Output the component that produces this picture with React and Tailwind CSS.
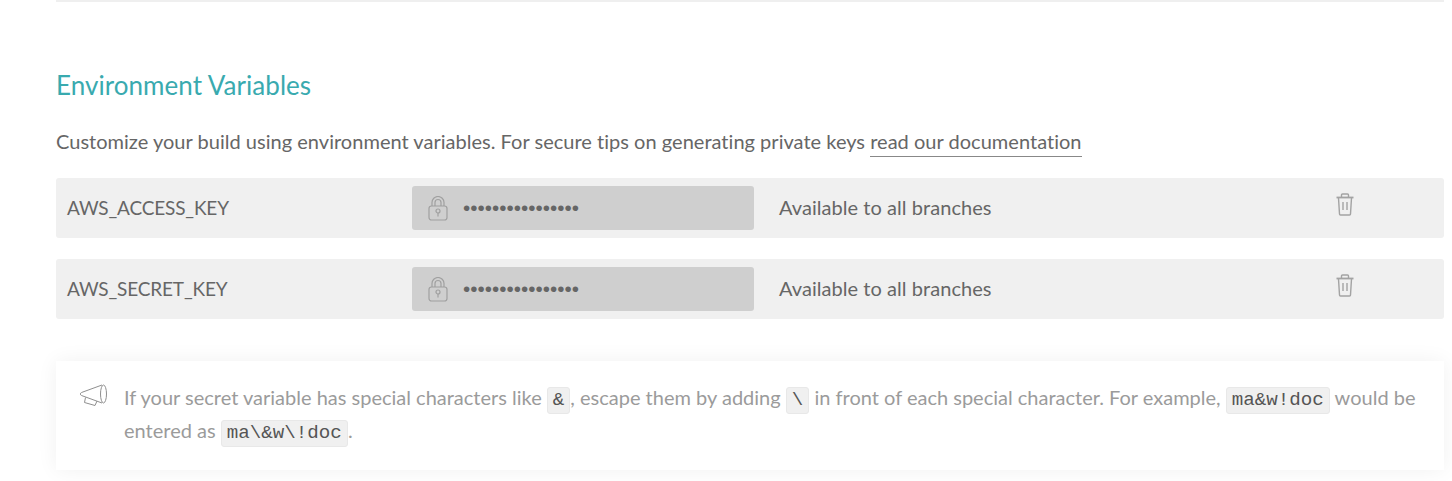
const Lock = () => (
  <svg width="20" height="25" viewBox="0 0 20 25" fill="none" stroke="#a0a0a0" strokeWidth="1.2" className="shrink-0">
    <rect x="1" y="10" width="18" height="14" rx="2.500" />
    <path d="M4 10V6.500a6 6 0 0 1 12 0V10" />
    <path d="M7 10V6.500a3 3 0 0 1 6 0V10" />
    <circle cx="10" cy="15" r="2" />
    <path d="M10 17v3.500" />
  </svg>
)

const Trash = () => (
  <svg width="18" height="23" viewBox="0 0 18 23" fill="none" stroke="#a3a3a3" strokeWidth="1.4">
    <path d="M0.500 4.500h17" strokeWidth="1.800" />
    <path d="M5.500 4V2a1 1 0 0 1 1-1h5a1 1 0 0 1 1 1v2" />
    <path d="M2.500 5l1 16a1 1 0 0 0 1 1h9a1 1 0 0 0 1-1l1-16" />
    <path d="M7 9v8M11 9v8" />
  </svg>
)

const Megaphone = () => (
  <svg width="29" height="23" viewBox="0 0 29 23" fill="none" stroke="#8f8f8f" strokeWidth="1" className="shrink-0 mt-[2px]">
    <path d="M23 2 2.500 9.500c-1.500.6-1.500 2.400 0 3L23 20" />
    <ellipse cx="24.500" cy="11" rx="3" ry="9" />
    <path d="M6.500 14.500 5.500 19.500 16 22.500 18 18" />
  </svg>
)

const EnvRow = ({ name }) => (
  <div className="flex items-start h-[60px] bg-[#f0f0f0] rounded-[3px]">
    <div className="w-[356px] pl-[11px] h-full flex items-center text-[19px] tracking-[-0.15px] text-[#666]">{name}</div>
    <div className="w-[342px] h-[44px] mt-2 bg-[#cfcfcf] rounded-[3px] flex items-center pl-[16px]">
      <Lock />
      <span className="ml-[15px] text-[20.700px] text-[#666] font-['Liberation_Sans',sans-serif] leading-none">••••••••••••••••</span>
    </div>
    <div className="ml-[25px] h-full pb-[2px] flex items-center text-[20px] tracking-[0.05px] text-[#666]">Available to all branches</div>
    <div className="ml-auto mr-[90px] mt-[15px]"><Trash /></div>
  </div>
)

const Code = ({ children }) => (
  <code className="inline-block leading-[25px] bg-[#f0f0f0] border border-[#e8e8e8] rounded-[3px] px-[5px] text-[19.200px] text-[#555] font-['Liberation_Mono',monospace]">{children}</code>
)

export default function App() {
  return (
    <div className="h-[481px] overflow-hidden bg-white font-['Lato',sans-serif] pl-[56px] pr-2">
      <div className="h-[2px] bg-[#efefef]" />
      <h2 className="mt-[66px] text-[26px] leading-[34px] tracking-[0.05px] text-[#39aaaf] font-normal">Environment Variables</h2>
      <p className="mt-[25px] text-[20px] leading-[28px] tracking-[0.02px] text-[#666]">
        Customize your build using environment variables. For secure tips on generating private keys{' '}
        <a className="border-b border-[#888] pb-[3px]">read our documentation</a>
      </p>
      <div className="mt-[23px] flex flex-col gap-[21px]">
        <EnvRow name="AWS_ACCESS_KEY" />
        <EnvRow name="AWS_SECRET_KEY" />
      </div>
      <div className="mt-[42px] h-[109px] bg-white shadow-[0_0_20px_rgba(0,0,0,0.06)] pl-[23px] pr-[20px] pt-[20px] flex gap-[16px]">
        <Megaphone />
        <p className="text-[20px] leading-[32px] text-[#9b9b9b]">
          If your secret variable has special characters like <Code>&amp;</Code>, escape them by adding <Code>\</Code> in front of each special character. For example, <Code>ma&amp;w!doc</Code> would be entered as <Code>ma\&amp;w\!doc</Code>.
        </p>
      </div>
    </div>
  )
}
